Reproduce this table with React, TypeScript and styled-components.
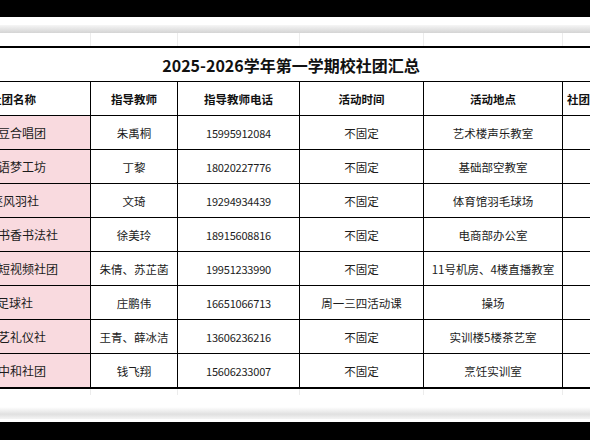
import styled, { createGlobalStyle } from "styled-components";

interface club {
  name: string;
  shift: number;
  teacher: string;
  phone: string;
  time: string;
  place: string;
}

const clubs: club[] = [
  { name: "豆合唱团", shift: -2, teacher: "朱禹桐", phone: "15995912084", time: "不固定", place: "艺术楼声乐教室" },
  { name: "语梦工坊", shift: -2, teacher: "丁黎", phone: "18020227776", time: "不固定", place: "基础部空教室" },
  { name: "逐风羽社", shift: -9, teacher: "文琦", phone: "19294934439", time: "不固定", place: "体育馆羽毛球场" },
  { name: "书香书法社", shift: -2, teacher: "徐美玲", phone: "18915608816", time: "不固定", place: "电商部办公室" },
  { name: "短视频社团", shift: -2, teacher: "朱倩、苏芷菡", phone: "19951233990", time: "不固定", place: "11号机房、4楼直播教室" },
  { name: "足球社", shift: -3, teacher: "庄鹏伟", phone: "16651066713", time: "周一三四活动课", place: "操场" },
  { name: "艺礼仪社", shift: -2, teacher: "王青、薛冰洁", phone: "13606236216", time: "不固定", place: "实训楼5楼茶艺室" },
  { name: "中和社团", shift: -2, teacher: "钱飞翔", phone: "15606233007", time: "不固定", place: "烹饪实训室" },
];

const GlobalStyle = createGlobalStyle`
  body {
    margin: 0;
    background: #000;
    font-family: "Noto Sans CJK SC", "Noto Sans", sans-serif;
  }
`;

export default function App() {
  return (
    <Page>
      <GlobalStyle />
      <BlackBar />
      <TopStrip>
        <Shadow />
        <GridLines>
          <Line />
          <Line />
          <Line />
          <Line />
          <Line />
          <Line $last />
        </GridLines>
      </TopStrip>
      <Sheet>
        <Title>2025-2026学年第一学期校社团汇总</Title>
        <Row>
          <HeadCell $align="left">社团名称</HeadCell>
          <HeadCell>指导教师</HeadCell>
          <HeadCell>指导教师电话</HeadCell>
          <HeadCell>活动时间</HeadCell>
          <HeadCell>活动地点</HeadCell>
          <HeadCell $align="left" $last>
            社团人数
          </HeadCell>
        </Row>
        {clubs.map((c) => (
          <Row key={c.phone}>
            <NameCell>
              <NameText $shift={c.shift}>{c.name}</NameText>
            </NameCell>
            <Cell>{c.teacher}</Cell>
            <Cell>
              <Phone>{c.phone}</Phone>
            </Cell>
            <Cell>{c.time}</Cell>
            <Cell>{c.place}</Cell>
            <Cell $last />
          </Row>
        ))}
      </Sheet>
      <BottomStrip>
        <GridLines $short>
          <Line />
          <Line />
          <Line />
          <Line />
          <Line />
          <Line $last />
        </GridLines>
        <BottomShadow />
      </BottomStrip>
      <BlackBar $bottom />
    </Page>
  );
}

const cols = "91px 87px 122px 124px 139px 1fr";

const Page = styled.div`
  width: 590px;
  height: 440px;
  display: flex;
  flex-direction: column;
  background: #fff;
  overflow: hidden;
`;

const BlackBar = styled.div<{ $bottom?: boolean }>`
  height: ${(p) => (p.$bottom ? "18px" : "17px")};
  background: #000;
  flex-shrink: 0;
`;

const TopStrip = styled.div`
  height: 29px;
  display: flex;
  flex-direction: column;
  padding-top: 8px;
  box-sizing: border-box;
`;

const Shadow = styled.div`
  height: 8px;
  background: linear-gradient(to bottom, #f6f6f6, #d4d4d4);
`;

const GridLines = styled.div<{ $short?: boolean }>`
  flex: ${(p) => (p.$short ? "0 0 6px" : "1")};
  display: grid;
  grid-template-columns: ${cols};
`;

const Line = styled.div<{ $last?: boolean }>`
  border-right: ${(p) => (p.$last ? "none" : "1px solid #ececec")};
`;

const Sheet = styled.div`
  border-top: 2px solid #000;
  border-bottom: 2px solid #000;
  color: #1c1c1c;
`;

const Title = styled.div`
  height: 33px;
  display: flex;
  align-items: center;
  justify-content: center;
  padding-right: 8px;
  font-size: 16px;
  font-weight: 700;
  color: #111;
`;

const Row = styled.div`
  display: grid;
  grid-template-columns: ${cols};
  height: 34px;
  border-top: 1px solid #000;
  box-sizing: border-box;
`;

const Cell = styled.div<{ $last?: boolean }>`
  display: flex;
  align-items: center;
  justify-content: center;
  border-right: ${(p) => (p.$last ? "none" : "1px solid #000")};
  font-size: 11.5px;
  white-space: nowrap;
  overflow: hidden;
`;

const HeadCell = styled(Cell)<{ $align?: string }>`
  justify-content: ${(p) => (p.$align === "left" ? "flex-start" : "center")};
  padding-left: ${(p) => (p.$align === "left" ? (p.$last ? "4px" : "0") : "0")};
  font-weight: 700;
  font-size: 11.5px;
  color: #111;
  text-indent: ${(p) => (p.$align === "left" && !p.$last ? "-10px" : "0")};
`;

const NameCell = styled(Cell)`
  background: #f9dadf;
  justify-content: flex-start;
  font-size: 12px;
`;

const NameText = styled.span<{ $shift: number }>`
  margin-left: ${(p) => p.$shift}px;
`;

const Phone = styled.span`
  font-size: 11px;
  letter-spacing: -0.2px;
`;

const BottomStrip = styled.div`
  flex: 1;
  display: flex;
  flex-direction: column;
`;

const BottomShadow = styled.div`
  margin-top: 12px;
  height: 12px;
  background: linear-gradient(to bottom, #fff, #e0e0e0 60%, #f4f4f4);
`;
